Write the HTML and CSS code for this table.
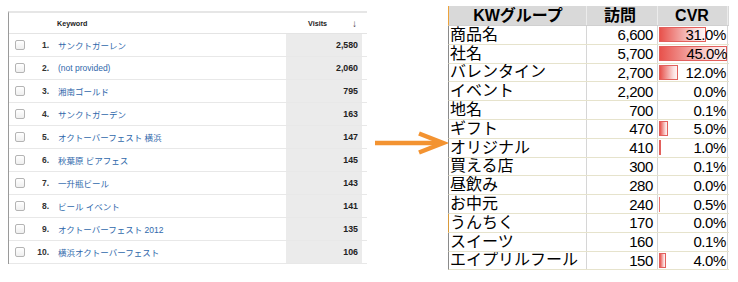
FILE: index.html
```html
<!DOCTYPE html>
<html lang="ja">
<head>
<meta charset="utf-8">
<title>Keyword report</title>
<link rel="stylesheet" href="styles.css">
</head>
<body>
<div class="page">
  <section class="ga">
    <div class="ga-head">
      <span></span><span></span>
      <span class="h-kw">Keyword</span>
      <span class="h-visits">Visits <span class="sort">&#8595;</span></span>
      <span></span>
    </div>
    <div class="ga-row"><span class="cb"></span><span class="num">1.</span><span class="kw">サンクトガーレン</span><span class="vis">2,580</span><span></span></div>
    <div class="ga-row"><span class="cb"></span><span class="num">2.</span><span class="kw">(not provided)</span><span class="vis">2,060</span><span></span></div>
    <div class="ga-row"><span class="cb"></span><span class="num">3.</span><span class="kw">湘南ゴールド</span><span class="vis">795</span><span></span></div>
    <div class="ga-row"><span class="cb"></span><span class="num">4.</span><span class="kw">サンクトガーデン</span><span class="vis">163</span><span></span></div>
    <div class="ga-row"><span class="cb"></span><span class="num">5.</span><span class="kw">オクトーバーフェスト 横浜</span><span class="vis">147</span><span></span></div>
    <div class="ga-row"><span class="cb"></span><span class="num">6.</span><span class="kw">秋葉原 ビアフェス</span><span class="vis">145</span><span></span></div>
    <div class="ga-row"><span class="cb"></span><span class="num">7.</span><span class="kw">一升瓶ビール</span><span class="vis">143</span><span></span></div>
    <div class="ga-row"><span class="cb"></span><span class="num">8.</span><span class="kw">ビール イベント</span><span class="vis">141</span><span></span></div>
    <div class="ga-row"><span class="cb"></span><span class="num">9.</span><span class="kw">オクトーバーフェスト 2012</span><span class="vis">135</span><span></span></div>
    <div class="ga-row"><span class="cb"></span><span class="num">10.</span><span class="kw">横浜オクトーバーフェスト</span><span class="vis">106</span><span></span></div>
  </section>

  <div class="arrow">
    <svg width="74" height="26" viewBox="0 0 74 26">
      <line x1="1" y1="13" x2="68" y2="13" stroke="#f39331" stroke-width="4.5"/>
      <polyline points="45,3.5 69,13 45,22.5" fill="none" stroke="#f39331" stroke-width="4.5" stroke-linejoin="miter"/>
    </svg>
  </div>

  <section class="xl">
    <div class="xl-row xl-head"><span class="c1">KWグループ</span><span class="c2">訪問</span><span class="c3">CVR</span></div>
    <div class="xl-row"><span class="c1">商品名</span><span class="c2">6,600</span><span class="c3"><i class="bar" style="width:47px"></i><span class="pct">31.0%</span></span></div>
    <div class="xl-row"><span class="c1">社名</span><span class="c2">5,700</span><span class="c3"><i class="bar" style="width:68px"></i><span class="pct">45.0%</span></span></div>
    <div class="xl-row"><span class="c1">バレンタイン</span><span class="c2">2,700</span><span class="c3"><i class="bar" style="width:19px"></i><span class="pct">12.0%</span></span></div>
    <div class="xl-row"><span class="c1">イベント</span><span class="c2">2,200</span><span class="c3"><span class="pct">0.0%</span></span></div>
    <div class="xl-row"><span class="c1">地名</span><span class="c2">700</span><span class="c3"><span class="pct">0.1%</span></span></div>
    <div class="xl-row"><span class="c1">ギフト</span><span class="c2">470</span><span class="c3"><i class="bar" style="width:9px"></i><span class="pct">5.0%</span></span></div>
    <div class="xl-row"><span class="c1">オリジナル</span><span class="c2">410</span><span class="c3"><i class="bar" style="width:2px"></i><span class="pct">1.0%</span></span></div>
    <div class="xl-row"><span class="c1">買える店</span><span class="c2">300</span><span class="c3"><span class="pct">0.1%</span></span></div>
    <div class="xl-row"><span class="c1">昼飲み</span><span class="c2">280</span><span class="c3"><span class="pct">0.0%</span></span></div>
    <div class="xl-row"><span class="c1">お中元</span><span class="c2">240</span><span class="c3"><i class="bar thin" style="width:1px"></i><span class="pct">0.5%</span></span></div>
    <div class="xl-row mark"><span class="c1">うんちく</span><span class="c2">170</span><span class="c3"><span class="pct">0.0%</span></span></div>
    <div class="xl-row"><span class="c1">スイーツ</span><span class="c2">160</span><span class="c3"><span class="pct">0.1%</span></span></div>
    <div class="xl-row"><span class="c1">エイプリルフール</span><span class="c2">150</span><span class="c3"><i class="bar" style="width:7px"></i><span class="pct">4.0%</span></span></div>
  </section>
</div>
</body>
</html>
```

FILE: styles.css
```css
html, body {
  margin: 0;
  padding: 0;
  background: #ffffff;
}

.page {
  display: flex;
  align-items: flex-start;
  width: 738px;
  height: 282px;
  overflow: hidden;
}

/* ---------- Analytics table (left) ---------- */
.ga {
  margin-left: 8px;
  margin-top: 11px;
  width: 358px;
  border-left: 1px solid #9a9a9a;
  border-top: 2px solid #e6e6e6;
  font-family: "Liberation Sans", "Noto Sans CJK JP", sans-serif;
  color: #333;
}

.ga-head,
.ga-row {
  display: grid;
  grid-template-columns: 21px 19px 237px 76px 4px;
  align-items: center;
  box-sizing: border-box;
}

.ga-head {
  height: 21px;
  border-bottom: 1px solid #e4e4e4;
  font-size: 7.2px;
  font-weight: bold;
  color: #222;
}

.h-kw {
  padding-left: 8px;
}

.h-visits {
  padding-left: 22px;
  display: flex;
  align-items: center;
}

.sort {
  margin-left: 25px;
  font-size: 10px;
  font-weight: bold;
  color: #444;
}

.ga-row {
  height: 23px;
  border-bottom: 1px solid #e8e8e8;
  font-size: 8.5px;
}

.ga-row .vis {
  align-self: stretch;
  display: flex;
  align-items: center;
  justify-content: flex-end;
  padding-right: 4px;
  background: #ebebeb;
  font-weight: bold;
  font-size: 8.8px;
  color: #222;
}

.cb {
  width: 8px;
  height: 8px;
  margin-left: 6px;
  border: 1px solid #b4b4b4;
  border-radius: 2px;
  background: linear-gradient(#ffffff, #efefef);
}

.num {
  text-align: right;
  font-weight: bold;
  color: #333;
}

.kw {
  padding-left: 9px;
  color: #2f68ab;
  white-space: nowrap;
}

/* ---------- Arrow ---------- */
.arrow {
  width: 81px;
  padding-top: 130px;
  padding-left: 7px;
  box-sizing: border-box;
}

.arrow svg {
  display: block;
}

/* ---------- Spreadsheet table (right) ---------- */
.xl {
  margin-top: 6px;
  width: 281px;
  font-family: "Liberation Sans", "Noto Sans CJK JP", sans-serif;
  color: #000;
}

.xl-row {
  display: grid;
  grid-template-columns: 138px 71px 70px;
  height: 18.8px;
  box-sizing: border-box;
  border-left: 1px solid #8a8a8a;
  border-bottom: 1px solid #e6e3cc;
  align-items: center;
  line-height: 1;
}

.xl-row > span {
  align-self: stretch;
  display: flex;
  align-items: center;
  border-right: 1px solid #d6d6d6;
  white-space: nowrap;
  line-height: 1;
  overflow: hidden;
}

.c1 {
  font-size: 16px;
  padding-left: 1px;
}

.c2 {
  justify-content: flex-end;
  padding-right: 4px;
  font-size: 15px;
  letter-spacing: -0.4px;
}

.c3 {
  display: grid !important;
  padding-right: 1px;
  font-size: 15px;
  letter-spacing: -0.4px;
}

.bar {
  grid-area: 1 / 1;
  justify-self: start;
  align-self: center;
  height: 15px;
  margin-left: 1px;
  box-sizing: border-box;
  border: 1px solid #e2605c;
  background: linear-gradient(to right, #e8524c 0%, #f2a3a0 45%, #fbe1e1 80%, #fff4f4 100%);
}

.bar.thin {
  border: 0;
  background: #e87a76;
}

.pct {
  grid-area: 1 / 1;
  justify-self: end;
  align-self: center;
}

.xl-head {
  height: 20px;
  background: #d9d9d9;
  border-left-color: #eda33c;
  border-bottom: 1px solid #d0d0d0;
  font-weight: bold;
}

.xl-head > span {
  justify-content: center;
  border-right-color: #ececec;
  font-size: 16px;
  letter-spacing: 0;
}

.xl-row.mark {
  border-left-color: #d99a3a;
}
```
